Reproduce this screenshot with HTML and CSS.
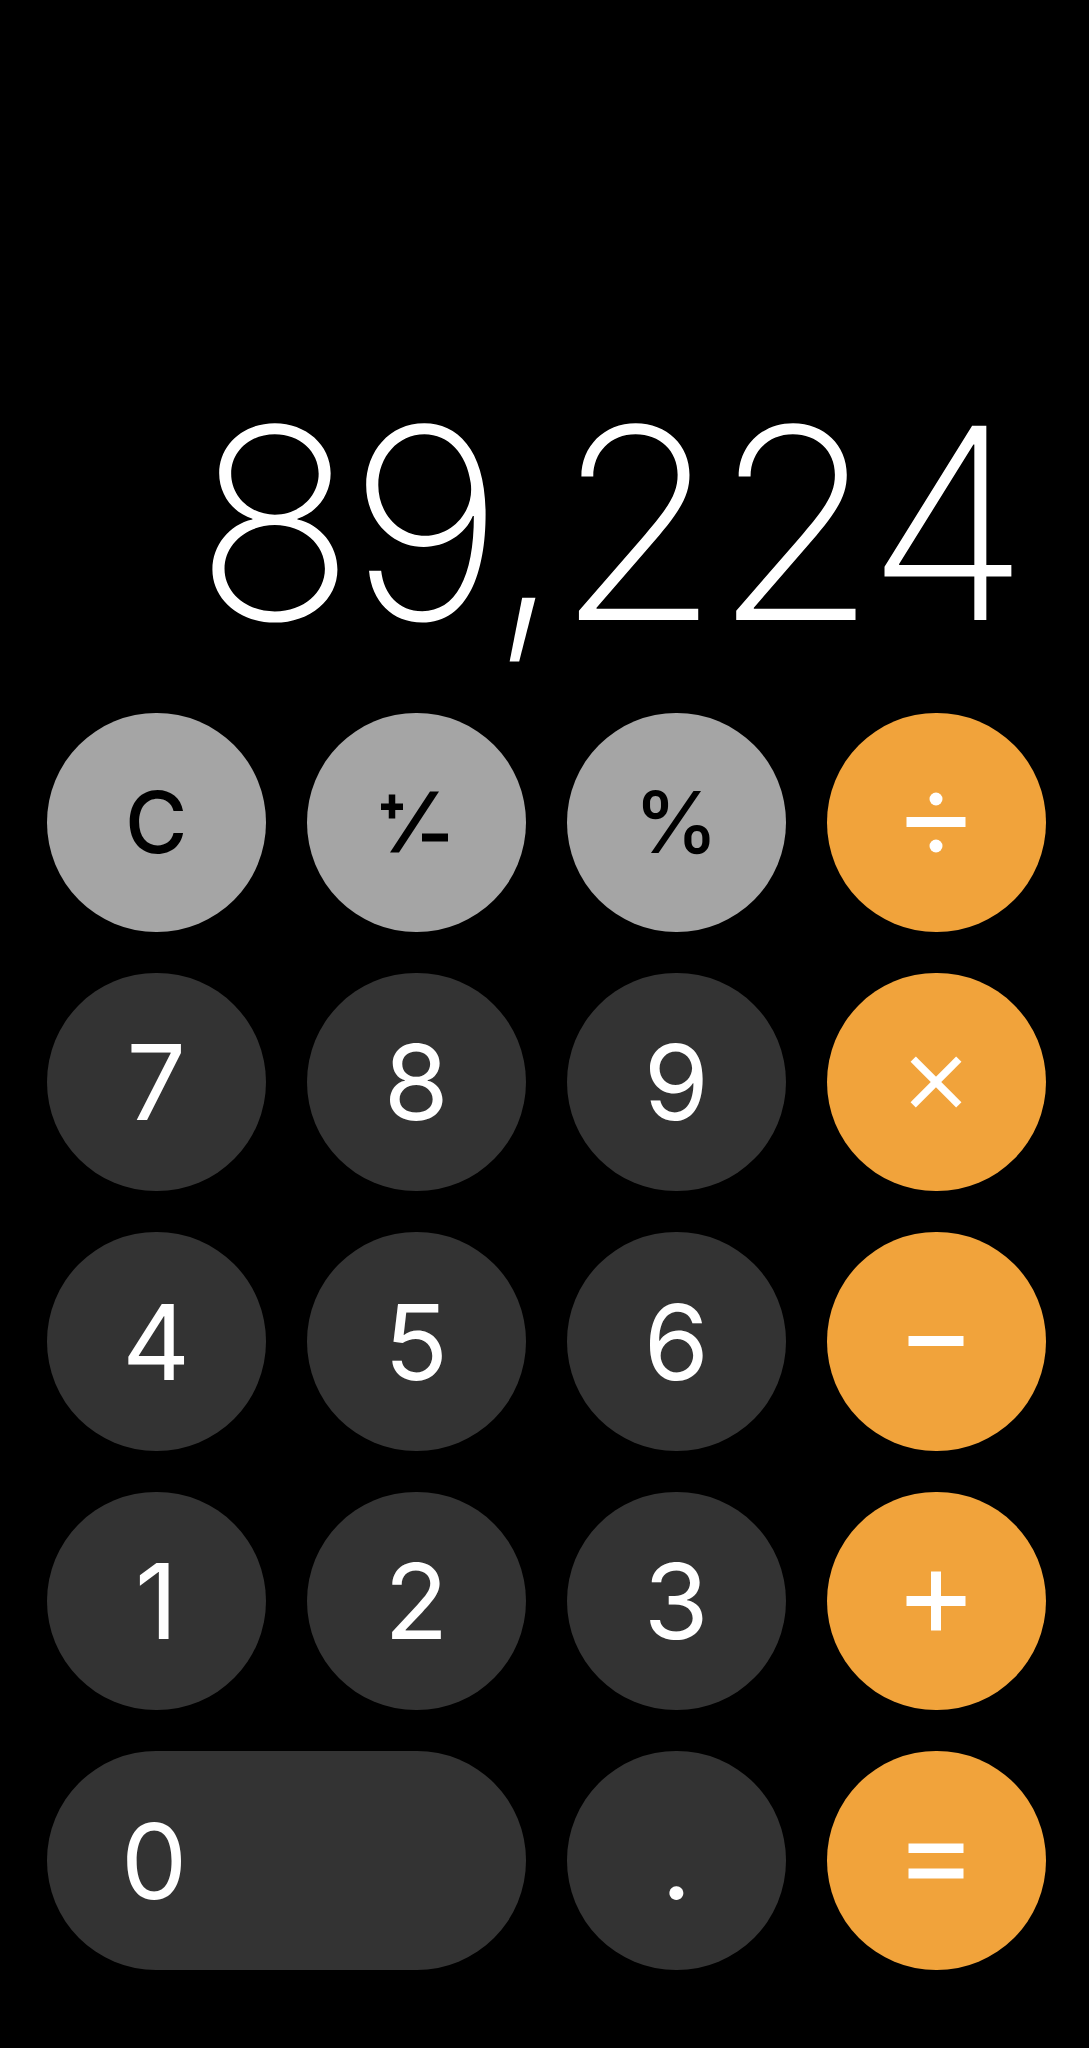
FILE: index.html
```html
<!DOCTYPE html>
<html lang="en">
<head>
<meta charset="utf-8">
<title>Calculator</title>
<link rel="stylesheet" href="styles.css">
</head>
<body>
<div class="calc">
  <div class="display"><span class="value">89,224</span></div>
  <div class="keypad">
    <div class="key fn"><span class="lbl-fn">C</span></div>
    <div class="key fn">
      <svg class="sym" viewBox="0 0 100 100" aria-label="plus minus">
        <rect x="15" y="31.5" width="22" height="6.5" fill="#000"/>
        <rect x="22.75" y="22.5" width="6.5" height="24" fill="#000"/>
        <polygon points="64,19.5 73,19.5 33,80.5 24,80.5" fill="#000"/>
        <rect x="56" y="61.5" width="26" height="8" fill="#000"/>
      </svg>
    </div>
    <div class="key fn"><span class="lbl-fn pct">%</span></div>
    <div class="key op">
      <svg class="sym" viewBox="0 0 100 100" aria-label="divide">
        <circle cx="50" cy="27" r="6.5" fill="#fff"/>
        <rect x="20.5" y="45" width="59" height="10" fill="#fff"/>
        <circle cx="50" cy="74" r="6.5" fill="#fff"/>
      </svg>
    </div>

    <div class="key num"><span class="lbl">7</span></div>
    <div class="key num"><span class="lbl">8</span></div>
    <div class="key num"><span class="lbl">9</span></div>
    <div class="key op">
      <svg class="sym" viewBox="0 0 100 100" aria-label="multiply">
        <line x1="27.2" y1="27.2" x2="72.8" y2="72.8" stroke="#fff" stroke-width="7.5"/>
        <line x1="72.8" y1="27.2" x2="27.2" y2="72.8" stroke="#fff" stroke-width="7.5"/>
      </svg>
    </div>

    <div class="key num"><span class="lbl">4</span></div>
    <div class="key num"><span class="lbl">5</span></div>
    <div class="key num"><span class="lbl">6</span></div>
    <div class="key op">
      <svg class="sym" viewBox="0 0 100 100" aria-label="minus">
        <rect x="22.5" y="45" width="55" height="10" fill="#fff"/>
      </svg>
    </div>

    <div class="key num"><span class="lbl">1</span></div>
    <div class="key num"><span class="lbl">2</span></div>
    <div class="key num"><span class="lbl">3</span></div>
    <div class="key op">
      <svg class="sym" viewBox="0 0 100 100" aria-label="plus">
        <rect x="20.5" y="45" width="59" height="10" fill="#fff"/>
        <rect x="45" y="20.5" width="10" height="59" fill="#fff"/>
      </svg>
    </div>

    <div class="key num zero"><span class="lbl">0</span></div>
    <div class="key num"><span class="lbl">.</span></div>
    <div class="key op">
      <svg class="sym" viewBox="0 0 100 100" aria-label="equals">
        <rect x="22.5" y="33.5" width="55" height="9.5" fill="#fff"/>
        <rect x="22.5" y="58.5" width="55" height="10" fill="#fff"/>
      </svg>
    </div>
  </div>
</div>
</body>
</html>
```

FILE: styles.css
```css
html, body {
  margin: 0;
  padding: 0;
  background: #000;
}

body {
  width: 1089px;
  height: 2048px;
  overflow: hidden;
  font-family: Inter, "Liberation Sans", sans-serif;
}

.calc {
  display: flex;
  flex-direction: column;
  padding: 0 43.5px 0 47px;
}

.display {
  height: 713px;
  display: flex;
  align-items: flex-end;
  justify-content: flex-end;
  box-sizing: border-box;
  padding-right: 23.5px;
  padding-bottom: 57px;
}

.value {
  color: #fff;
  font-size: 267px;
  font-weight: 200;
  line-height: 1;
  letter-spacing: -7.5px;
}

.keypad {
  display: grid;
  grid-template-columns: repeat(4, 218.5px);
  grid-auto-rows: 218.5px;
  column-gap: 41.5px;
  row-gap: 41px;
}

.key {
  border-radius: 109.25px;
  display: flex;
  align-items: center;
  justify-content: center;
}

.fn { background: #a5a5a5; }
.num { background: #333333; }
.op { background: #f1a33b; }

.zero {
  grid-column: span 2;
  justify-content: flex-start;
  padding-left: 74px;
}

.lbl {
  color: #fff;
  font-size: 105px;
  font-weight: 400;
  line-height: 1;
}

.lbl-fn {
  color: #000;
  font-size: 85px;
  font-weight: 500;
  line-height: 1;
}

.sym {
  width: 100px;
  height: 100px;
  display: block;
}
```
